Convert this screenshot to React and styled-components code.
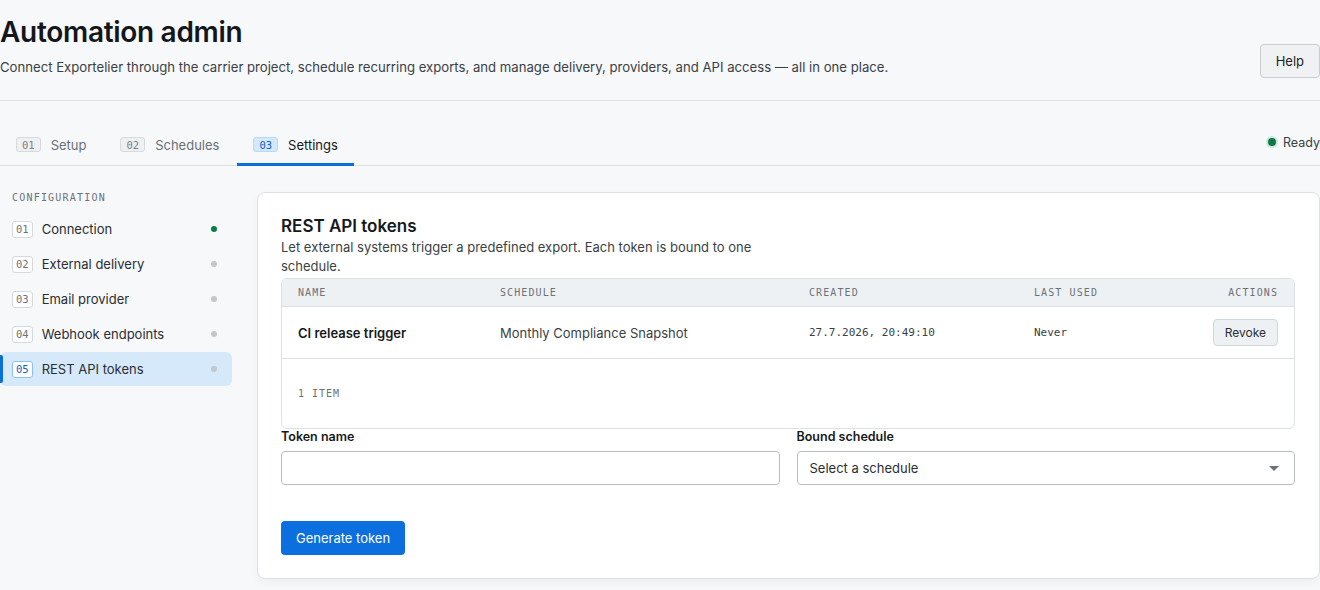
import React from "react";
import styled, { createGlobalStyle } from "styled-components";

const GlobalStyle = createGlobalStyle`
  html, body {
    margin: 0;
    padding: 0;
    background: #f6f8fa;
    font-family: Inter, "Noto Sans", "Liberation Sans", sans-serif;
    color: #1c1f23;
  }
  * { box-sizing: border-box; }
`;

const mono = `"DejaVu Sans Mono", "Liberation Mono", monospace`;

const Page = styled.div`
  width: 1320px;
  height: 590px;
  overflow: hidden;
`;

const Header = styled.header`
  display: flex;
  justify-content: space-between;
  align-items: flex-end;
  padding: 14px 0 22px;
  border-bottom: 1px solid #dcdfe3;
`;

const Title = styled.h1`
  margin: 0;
  font-size: 28px;
  line-height: 36px;
  font-weight: 600;
  letter-spacing: -0.3px;
  color: #14171a;
`;

const Subtitle = styled.p`
  margin: 7px 0 0;
  font-size: 13.15px;
  line-height: 20px;
  color: #3a3f45;
  padding-bottom: 1px;
`;

const HelpButton = styled.button`
  height: 34px;
  padding: 0 15px;
  border: 1px solid #c9cdd2;
  border-radius: 4px;
  background: #eff1f3;
  font: inherit;
  font-size: 13px;
  color: #1c1f23;
`;

const TabBar = styled.nav`
  display: flex;
  align-items: flex-end;
  justify-content: space-between;
  height: 65px;
  border-bottom: 1px solid #dcdfe3;
`;

const Tabs = styled.div`
  display: flex;
  gap: 2px;
`;

const Tab = styled.div`
  display: flex;
  align-items: center;
  gap: 10px;
  height: 39px;
  padding: 0 16px 1px;
  margin-bottom: -1px;
  font-size: 13px;
  color: ${p => (p.active ? "#16191c" : "#6a7077")};
  border-bottom: 3px solid ${p => (p.active ? "#0b6fd9" : "transparent")};
`;

const Badge = styled.span`
  display: inline-flex;
  align-items: center;
  justify-content: center;
  height: 15px;
  padding: 0 5px;
  border-radius: 3px;
  font-family: ${mono};
  font-size: 10.5px;
  border: 1px solid ${p => (p.active ? "#b7d8f6" : "#d6d9dd")};
  background: ${p => (p.active ? "#d3e8fb" : "#eef0f2")};
  color: ${p => (p.active ? "#0b62c0" : "#7a8086")};
`;

const Status = styled.div`
  display: flex;
  align-items: center;
  gap: 7px;
  height: 46px;
  font-size: 12.5px;
  color: #3a3f45;
`;

const StatusDot = styled.span`
  width: 8px;
  height: 8px;
  border-radius: 50%;
  background: #0b7a45;
  box-shadow: 0 0 0 2px #cfe8d9;
`;

const Body = styled.div`
  display: flex;
  gap: 24px;
  padding-top: 26px;
`;

const Sidebar = styled.aside`
  width: 233px;
  flex-shrink: 0;
`;

const SideHeading = styled.div`
  padding: 0 12px;
  margin: 0 0 8px;
  font-family: ${mono};
  font-size: 10px;
  letter-spacing: 1.2px;
  color: #6c7278;
  line-height: 12px;
`;

const SideList = styled.div`
  display: flex;
  flex-direction: column;
  gap: 1px;
  width: 232px;
`;

const SideItem = styled.div`
  position: relative;
  display: flex;
  align-items: center;
  gap: 9px;
  height: 34px;
  padding: 0 12px;
  border-radius: 6px;
  font-size: 13px;
  color: #2a2e33;
  background: ${p => (p.active ? "#d5e9fb" : "transparent")};
  &::before {
    content: "";
    display: ${p => (p.active ? "block" : "none")};
    position: absolute;
    left: 0;
    top: 3px;
    bottom: 3px;
    width: 3px;
    border-radius: 0 2px 2px 0;
    background: #0b6fd9;
  }
`;

const SideBadge = styled(Badge)`
  height: 17px;
  padding: 0 3px;
  background: #fff;
  border-color: ${p => (p.active ? "#8ec0ef" : "#d6d9dd")};
  color: ${p => (p.active ? "#0b62c0" : "#6c7278")};
  font-size: 10.5px;
`;

const SideLabel = styled.span`
  flex: 1;
`;

const Dot = styled.span`
  width: 6px;
  height: 6px;
  margin-right: 3px;
  border-radius: 50%;
  background: ${p => (p.on ? "#0b7a45" : "#c3c7cc")};
`;

const Card = styled.section`
  flex: 1;
  height: 387px;
  padding: 22px 24px 23px 23px;
  background: #fff;
  border: 1px solid #dde1e5;
  border-radius: 8px;
  box-shadow: 0 4px 10px rgba(30, 50, 70, 0.04);
`;

const CardTitle = styled.h2`
  margin: 0;
  font-size: 17px;
  line-height: 22px;
  font-weight: 600;
  color: #16191c;
`;

const CardDesc = styled.p`
  margin: 1px 0 2px;
  max-width: 480px;
  font-size: 13px;
  line-height: 19px;
  color: #3a3f45;
`;

const Table = styled.div`
  border: 1px solid #dde1e5;
  border-radius: 6px;
  overflow: hidden;
`;

const Row = styled.div`
  display: grid;
  grid-template-columns: 202px 309px 225px 1fr 120px;
  align-items: center;
  height: ${p => p.h}px;
  padding: 0 16px;
  background: ${p => (p.head ? "#eef1f4" : "#fff")};
  border-bottom: 1px solid #dde1e5;
`;

const HeadCell = styled.div`
  font-family: ${mono};
  font-size: 10px;
  letter-spacing: 1.1px;
  color: #6c7278;
  text-align: ${p => (p.right ? "right" : "left")};
`;

const Cell = styled.div`
  font-size: 13px;
  color: ${p => (p.strong ? "#16191c" : "#3a3f45")};
  font-weight: ${p => (p.strong ? 600 : 400)};
  font-family: ${p => (p.mono ? mono : "inherit")};
  ${p => p.mono && "font-size: 11px;"}
  text-align: ${p => (p.right ? "right" : "left")};
`;

const SmallButton = styled.button`
  height: 27px;
  padding: 0 11px;
  border: 1px solid #d3d7db;
  border-radius: 4px;
  background: #eef1f3;
  font: inherit;
  font-size: 12px;
  color: #2a2e33;
`;

const Footer = styled.div`
  display: flex;
  align-items: center;
  height: 69px;
  padding: 0 16px;
  font-family: ${mono};
  font-size: 10px;
  letter-spacing: 1px;
  color: #6c7278;
`;

const Form = styled.div`
  display: grid;
  grid-template-columns: 1fr 1fr;
  gap: 17px;
`;

const Field = styled.label`
  display: flex;
  flex-direction: column;
  gap: 7px;
`;

const Label = styled.span`
  font-size: 12.5px;
  line-height: 15px;
  font-weight: 600;
  color: #16191c;
`;

const Input = styled.div`
  display: flex;
  align-items: center;
  justify-content: space-between;
  height: 34px;
  padding: 0 12px;
  border: 1px solid #b9bdc2;
  border-radius: 4px;
  background: #fff;
  font-size: 13px;
  color: #2a2e33;
`;

const Caret = styled.span`
  width: 0;
  height: 0;
  margin-right: 3px;
  border-left: 5px solid transparent;
  border-right: 5px solid transparent;
  border-top: 5px solid #6c7278;
`;

const PrimaryButton = styled.button`
  margin-top: 36px;
  height: 34px;
  padding: 0 15px;
  border: none;
  border-radius: 4px;
  background: #0b6fdf;
  color: #fff;
  font: inherit;
  font-size: 13px;
`;

const tabs = [
  { n: "01", label: "Setup" },
  { n: "02", label: "Schedules" },
  { n: "03", label: "Settings", active: true },
];

const items = [
  { n: "01", label: "Connection", on: true },
  { n: "02", label: "External delivery" },
  { n: "03", label: "Email provider" },
  { n: "04", label: "Webhook endpoints" },
  { n: "05", label: "REST API tokens", active: true },
];

export default function App() {
  return (
    <Page>
      <GlobalStyle />
      <Header>
        <div>
          <Title>Automation admin</Title>
          <Subtitle>
            Connect Exportelier through the carrier project, schedule recurring exports, and manage
            delivery, providers, and API access — all in one place.
          </Subtitle>
        </div>
        <HelpButton>Help</HelpButton>
      </Header>

      <TabBar>
        <Tabs>
          {tabs.map(t => (
            <Tab key={t.n} active={t.active}>
              <Badge active={t.active}>{t.n}</Badge>
              {t.label}
            </Tab>
          ))}
        </Tabs>
        <Status>
          <StatusDot />
          Ready
        </Status>
      </TabBar>

      <Body>
        <Sidebar>
          <SideHeading>CONFIGURATION</SideHeading>
          <SideList>
            {items.map(i => (
              <SideItem key={i.n} active={i.active}>
                <SideBadge active={i.active}>{i.n}</SideBadge>
                <SideLabel>{i.label}</SideLabel>
                <Dot on={i.on} />
              </SideItem>
            ))}
          </SideList>
        </Sidebar>

        <Card>
          <CardTitle>REST API tokens</CardTitle>
          <CardDesc>
            Let external systems trigger a predefined export. Each token is bound to one schedule.
          </CardDesc>
          <Table>
            <Row head h={28}>
              <HeadCell>NAME</HeadCell>
              <HeadCell>SCHEDULE</HeadCell>
              <HeadCell>CREATED</HeadCell>
              <HeadCell>LAST USED</HeadCell>
              <HeadCell right>ACTIONS</HeadCell>
            </Row>
            <Row h={52}>
              <Cell strong>CI release trigger</Cell>
              <Cell>Monthly Compliance Snapshot</Cell>
              <Cell mono>27.7.2026, 20:49:10</Cell>
              <Cell mono>Never</Cell>
              <Cell right>
                <SmallButton>Revoke</SmallButton>
              </Cell>
            </Row>
            <Footer>1 ITEM</Footer>
          </Table>
          <Form>
            <Field>
              <Label>Token name</Label>
              <Input />
            </Field>
            <Field>
              <Label>Bound schedule</Label>
              <Input>
                Select a schedule
                <Caret />
              </Input>
            </Field>
          </Form>
          <PrimaryButton>Generate token</PrimaryButton>
        </Card>
      </Body>
    </Page>
  );
}
